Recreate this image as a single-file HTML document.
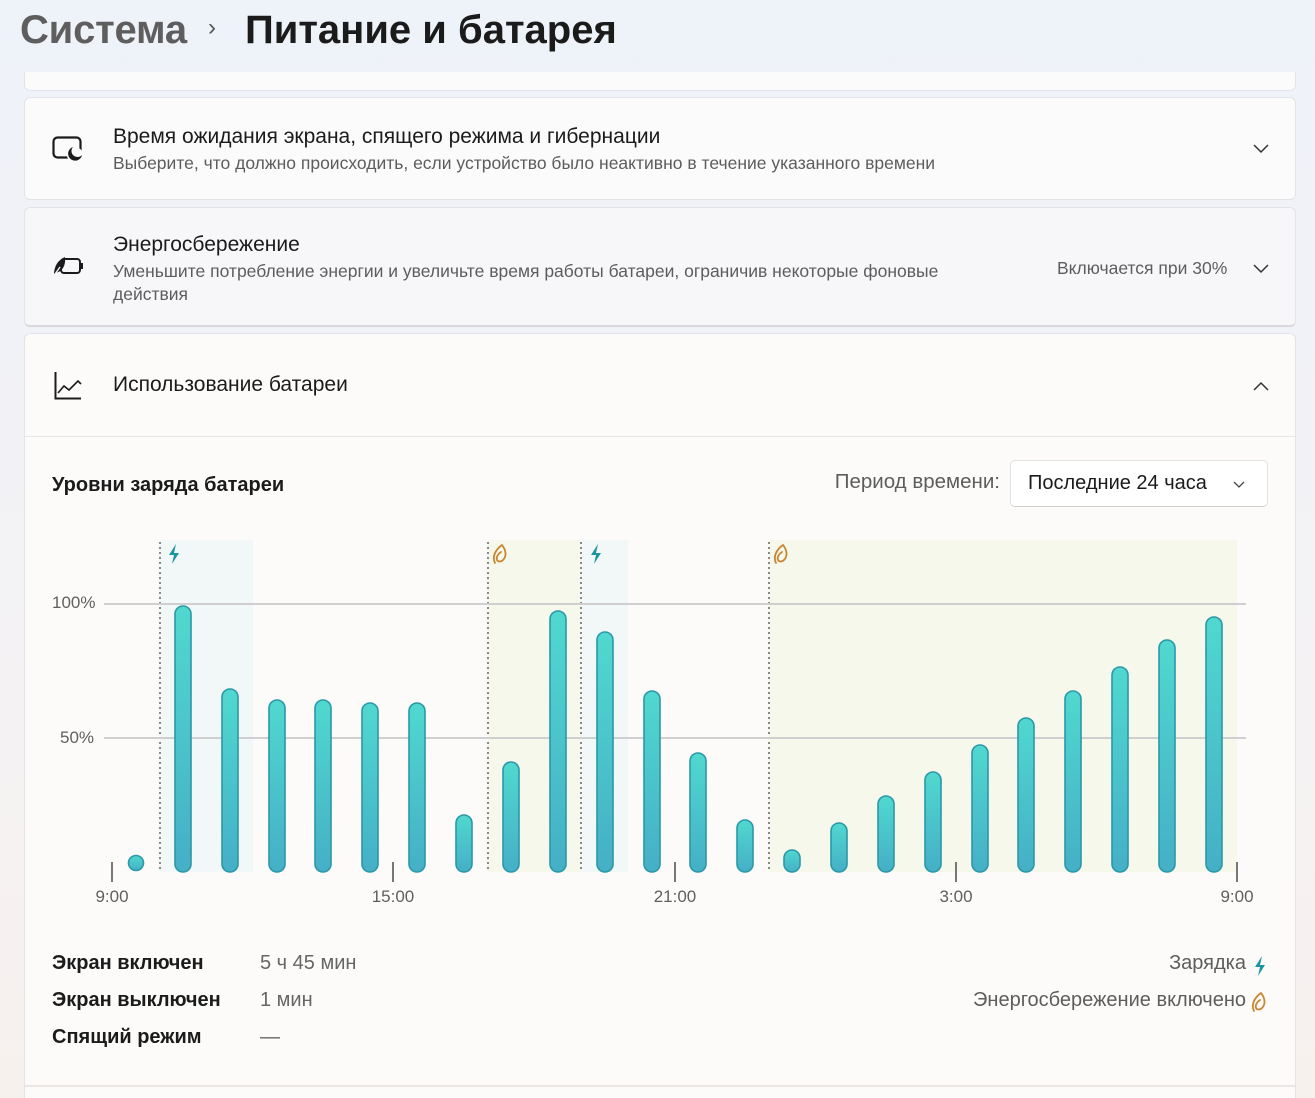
<!DOCTYPE html>
<html><head><meta charset="utf-8"><style>
*{margin:0;padding:0;box-sizing:border-box}
html,body{width:1315px;height:1098px;overflow:hidden}
body{font-family:"Segoe UI","Liberation Sans","Noto Sans CJK SC",sans-serif;background:linear-gradient(180deg,#eef2f9 0%,#f2f2f6 40%,#f7f1ee 100%);position:relative;color:#1b1b1b}
.abs{position:absolute}
.card{position:absolute;left:24px;width:1272px;background:#fbfbfc;border:1px solid #e3e4e8;border-radius:6px}
.t{font-size:21px;color:#1b1b1b;position:absolute;white-space:nowrap}
.s{font-size:17.5px;color:#5d5d5d;position:absolute;white-space:nowrap}
</style></head><body>
<div class="abs" style="left:20px;top:8px;font-size:40px;font-weight:600;color:#5e5e5e;letter-spacing:-0.2px">Система</div>
<div class="abs" style="left:208px;top:14px;font-size:24px;color:#555">›</div>
<div class="abs" style="left:245px;top:8px;font-size:40px;font-weight:600;color:#1b1b1b">Питание и батарея</div>

<div class="card" style="top:72px;height:19px;border-top:none;border-radius:0 0 6px 6px"></div>

<div class="card" style="top:97px;height:103px">
<svg class="abs" style="left:27px;top:38px" width="32" height="28" viewBox="0 0 32 28"><rect x="1.5" y="1.5" width="27" height="20" rx="4" fill="none" stroke="#1b1b1b" stroke-width="2.2"/><circle cx="23" cy="19" r="8" fill="#fbfbfc"/><path d="M21 11 A7 7 0 1 0 30 19 A6 6 0 0 1 21 11Z" fill="#1b1b1b"/></svg>
<div class="t" style="left:88px;top:27px">Время ожидания экрана, спящего режима и гибернации</div>
<div class="s" style="left:88px;top:55px">Выберите, что должно происходить, если устройство было неактивно в течение указанного времени</div>
<svg class="abs" style="left:1228px;top:46px" width="16" height="10"><path d="M1 1l7 7 7-7" fill="none" stroke="#333" stroke-width="1.5"/></svg>
</div>

<div class="card" style="top:207px;height:120px;background:#f7f7f9;border-bottom:2px solid #d8d8dc">
<svg class="abs" style="left:27px;top:46px" width="34" height="24" viewBox="0 0 34 24"><rect x="9" y="5" width="19" height="14" rx="3" fill="none" stroke="#1b1b1b" stroke-width="2"/><rect x="28" y="9" width="3" height="6" fill="#1b1b1b"/><path d="M2 21 C2 12 6 6 13 3 C14 12 10 18 3 19Z" fill="#1b1b1b"/><path d="M1 23 L8 13" stroke="#f7f7f9" stroke-width="1.4"/></svg>
<div class="t" style="left:88px;top:25px">Энергосбережение</div>
<div class="s" style="left:88px;top:53px">Уменьшите потребление энергии и увеличьте время работы батареи, ограничив некоторые фоновые</div>
<div class="s" style="left:88px;top:76px">действия</div>
<div class="s" style="left:1032px;top:50px">Включается при 30%</div>
<svg class="abs" style="left:1228px;top:56px" width="16" height="10"><path d="M1 1l7 7 7-7" fill="none" stroke="#333" stroke-width="1.5"/></svg>
</div>

<div class="card" style="top:333px;height:765px;background:#fcfbfa;border-bottom:none;border-radius:6px 6px 0 0">
<svg class="abs" style="left:29px;top:38px" width="28" height="28" viewBox="0 0 28 28"><path d="M1.5 0v26.5H27" fill="none" stroke="#1b1b1b" stroke-width="2"/><path d="M4 21l6-7 5 4 9-9 3 3" fill="none" stroke="#1b1b1b" stroke-width="1.6"/></svg>
<div class="t" style="left:88px;top:39px">Использование батареи</div>
<svg class="abs" style="left:1228px;top:47px" width="16" height="10"><path d="M1 9l7-7 7 7" fill="none" stroke="#333" stroke-width="1.5"/></svg>
<div class="abs" style="left:0;top:102px;width:1270px;height:1px;background:#e8e6e4"></div>
<div class="abs" style="left:27px;top:140px;font-size:20px;font-weight:600">Уровни заряда батареи</div>
<div class="abs" style="right:295px;top:136px;font-size:20.5px;color:#5d5d5d">Период времени:</div>
<div class="abs" style="left:985px;top:126px;width:258px;height:47px;background:#fff;border:1px solid #e2e2e2;border-bottom-color:#cfcfcf;border-radius:5px">
<div class="abs" style="left:17px;top:11px;font-size:20px">Последние 24 часа</div>
<svg class="abs" style="left:222px;top:20px" width="12" height="8"><path d="M1 1l5 5 5-5" fill="none" stroke="#444" stroke-width="1.3"/></svg>
</div>
<div class="abs" style="left:27px;top:611px;font-size:20px;font-weight:600;line-height:37px">Экран включен<br>Экран выключен<br>Спящий режим</div>
<div class="abs" style="left:235px;top:611px;font-size:20px;color:#666;line-height:37px">5 ч 45 мин<br>1 мин<br>—</div>
<div class="abs" style="right:49px;top:611px;font-size:20px;color:#5d5d5d;text-align:right;line-height:37px">Зарядка<br>Энергосбережение включено</div>
<div class="abs" style="left:0;top:751px;width:1270px;height:2px;background:#ece6e2"></div>
</div>

<svg class="abs" style="left:0;top:0" width="1315" height="1098">
<defs><linearGradient id="g" x1="0" y1="0" x2="0" y2="1"><stop offset="0" stop-color="#50d8cf"/><stop offset="1" stop-color="#45afc6"/></linearGradient></defs>
<rect x="160" y="540" width="93" height="332" fill="#eef7f6" opacity=".8"/>
<rect x="488" y="540" width="93" height="332" fill="#f5f7ea" opacity=".9"/>
<rect x="581" y="540" width="47" height="332" fill="#eef7f6" opacity=".8"/>
<rect x="769" y="540" width="468" height="332" fill="#f5f7ea" opacity=".9"/>
<g stroke="#888" stroke-width="2" stroke-dasharray="2 3"><path d="M160 542V872M488 542V872M581 542V872M769 542V872"/></g>
<g stroke="#cfcfcf" stroke-width="2"><path d="M104 604H1246M104 738H1246"/></g>
<g font-size="17" fill="#606060" font-family="Segoe UI,Liberation Sans,sans-serif"><text x="52" y="608">100%</text><text x="60" y="743">50%</text>
<g text-anchor="middle"><text x="112" y="902">9:00</text><text x="393" y="902">15:00</text><text x="675" y="902">21:00</text><text x="956" y="902">3:00</text><text x="1237" y="902">9:00</text></g></g>
<g stroke="#777" stroke-width="2"><path d="M112 862V882M393 862V882M675 862V882M956 862V882M1237 862V882"/></g>
<g fill="url(#g)" stroke="#2b98a8" stroke-width="1.6">
<circle cx="136" cy="863" r="7.5"/>
<rect x="175" y="606" width="16" height="266" rx="8"/>
<rect x="222" y="689" width="16" height="183" rx="8"/>
<rect x="269" y="700" width="16" height="172" rx="8"/>
<rect x="315" y="700" width="16" height="172" rx="8"/>
<rect x="362" y="703" width="16" height="169" rx="8"/>
<rect x="409" y="703" width="16" height="169" rx="8"/>
<rect x="456" y="815" width="16" height="57" rx="8"/>
<rect x="503" y="762" width="16" height="110" rx="8"/>
<rect x="550" y="611" width="16" height="261" rx="8"/>
<rect x="597" y="632" width="16" height="240" rx="8"/>
<rect x="644" y="691" width="16" height="181" rx="8"/>
<rect x="690" y="753" width="16" height="119" rx="8"/>
<rect x="737" y="820" width="16" height="52" rx="8"/>
<rect x="784" y="850" width="16" height="22" rx="8"/>
<rect x="831" y="823" width="16" height="49" rx="8"/>
<rect x="878" y="796" width="16" height="76" rx="8"/>
<rect x="925" y="772" width="16" height="100" rx="8"/>
<rect x="972" y="745" width="16" height="127" rx="8"/>
<rect x="1018" y="718" width="16" height="154" rx="8"/>
<rect x="1065" y="691" width="16" height="181" rx="8"/>
<rect x="1112" y="667" width="16" height="205" rx="8"/>
<rect x="1159" y="640" width="16" height="232" rx="8"/>
<rect x="1206" y="617" width="16" height="255" rx="8"/>
</g>
<g fill="#1b94a4">
<path d="M176 544l-7 11h5l-2 9 7-11h-5z"/>
<path d="M598 544l-7 11h5l-2 9 7-11h-5z"/>
<path d="M1262 956l-7 11h5l-2 9 7-11h-5z"/>
</g>
<g fill="none" stroke="#c98630" stroke-width="1.8" stroke-linecap="round">
<path d="M495 563c-3-6 0-13 7-18 4 5 5 11 1 15-2 2-5 2-6 0-1-3 1-6 4-8"/>
<path d="M776 563c-3-6 0-13 7-18 4 5 5 11 1 15-2 2-5 2-6 0-1-3 1-6 4-8"/>
<path d="M1254 1011c-3-6 0-13 7-18 4 5 5 11 1 15-2 2-5 2-6 0-1-3 1-6 4-8"/>
</g>
</svg>
</body></html>
